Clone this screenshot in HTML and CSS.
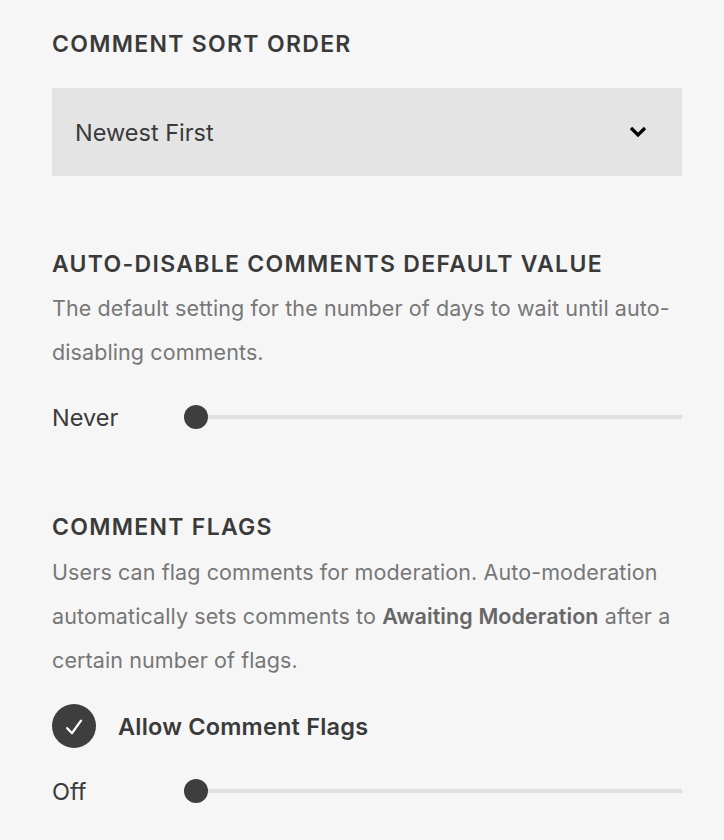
FILE: index.html
```html
<!DOCTYPE html>
<html>
<head>
<meta charset="utf-8">
<link rel="stylesheet" href="styles.css">
</head>
<body>
<div class="panel">
  <section class="section first">
    <h2 class="heading">COMMENT SORT ORDER</h2>
    <div class="select">
      <span class="select-value">Newest First</span>
      <svg class="chevron" width="18" height="12" viewBox="0 0 18 12"><path d="M2 2 L9 9 L16 2" fill="none" stroke="#000" stroke-width="3.2"/></svg>
    </div>
  </section>
  <section class="section">
    <h2 class="heading">AUTO-DISABLE COMMENTS DEFAULT VALUE</h2>
    <p class="desc">The default setting for the number of days to wait until auto-disabling comments.</p>
    <div class="slider-row">
      <span class="slider-label">Never</span>
      <div class="slider"><span class="thumb"></span><span class="track"></span></div>
    </div>
  </section>
  <section class="section">
    <h2 class="heading">COMMENT FLAGS</h2>
    <p class="desc desc-flags">Users can flag comments for moderation. Auto-moderation automatically sets comments to <strong>Awaiting Moderation</strong> after a certain number of flags.</p>
    <div class="check-row">
      <span class="check"><svg width="20" height="20" viewBox="0 0 20 20"><path d="M3.2 12.2 L8 17.2 L17 4.6" fill="none" stroke="#fff" stroke-width="2.3" stroke-linecap="round" stroke-linejoin="round"/></svg></span>
      <span class="check-label">Allow Comment Flags</span>
    </div>
    <div class="slider-row slider-row-off">
      <span class="slider-label">Off</span>
      <div class="slider"><span class="thumb"></span><span class="track"></span></div>
    </div>
  </section>
</div>
</body>
</html>
```
FILE: styles.css
```css
html, body {
  margin: 0;
  padding: 0;
  background: #f6f6f6;
}
body {
  font-family: Inter, "Liberation Sans", sans-serif;
  color: #3a3a3a;
}
.panel {
  width: 630px;
  padding: 30px 42px 0 52px;
}
.section {
  margin-top: 74px;
}
.section.first {
  margin-top: 0;
}
.heading {
  margin: 0;
  font-size: 23px;
  line-height: 28px;
  font-weight: 600;
  letter-spacing: 1.3px;
  color: #3a3a3a;
}
.select {
  margin-top: 30px;
  height: 88px;
  background: #e4e4e4;
  display: flex;
  align-items: center;
  justify-content: space-between;
  padding: 0 35px 0 23px;
}
.select-value {
  font-size: 23.5px;
  color: #3a3a3a;
}
.chevron {
  display: block;
}
.desc {
  margin: 8px 0 0;
  font-size: 21.5px;
  line-height: 44px;
  letter-spacing: 0.1px;
  color: #777;
}
.desc-flags {
  margin-top: 9px;
}
.desc strong {
  font-weight: 600;
  color: #666;
}
.slider-row {
  margin-top: 21px;
  height: 44px;
  display: flex;
  align-items: center;
}
.slider-label {
  width: 132px;
  font-size: 23.5px;
  color: #3a3a3a;
}
.slider {
  flex: 1;
  position: relative;
  height: 24px;
  display: flex;
  align-items: center;
}
.thumb {
  position: absolute;
  left: 0;
  top: 0;
  width: 24px;
  height: 24px;
  border-radius: 50%;
  background: #3e3e3e;
  z-index: 1;
}
.track {
  margin-left: 12px;
  flex: 1;
  height: 4px;
  background: #e0e0e0;
}
.check-row {
  margin-top: 22px;
  height: 44px;
  display: flex;
  align-items: center;
}
.check {
  width: 44px;
  height: 44px;
  border-radius: 50%;
  background: #3e3e3e;
  display: flex;
  align-items: center;
  justify-content: center;
}
.check svg {
  display: block;
}
.check-label {
  margin-left: 22px;
  font-size: 23.5px;
  font-weight: 600;
  letter-spacing: 0.2px;
  color: #3a3a3a;
}
```
